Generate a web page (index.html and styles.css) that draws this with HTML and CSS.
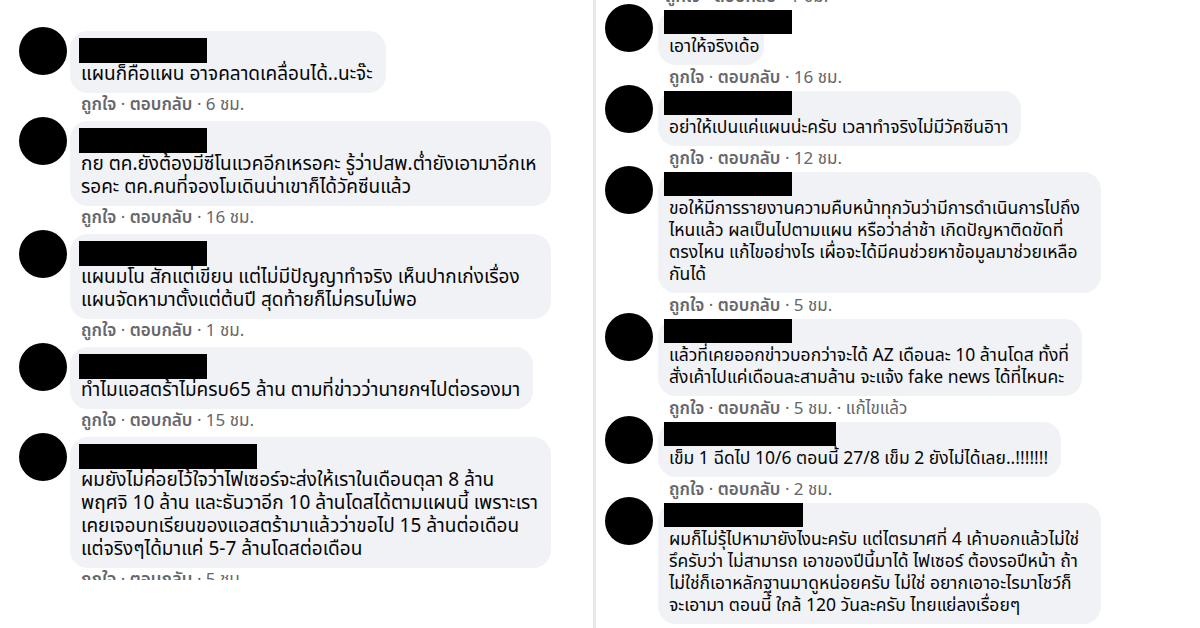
FILE: index.html
```html
<!DOCTYPE html>
<html lang="th">
<head>
<meta charset="utf-8">
<title>Comments</title>
<link rel="stylesheet" href="styles.css">
</head>
<body>
<div class="page">
  <section class="panel panel-left">
    <div class="clip">
      <div class="comment">
        <div class="avatar"></div>
        <div class="body">
          <div class="bubble">
            <div class="name"></div>
            <p class="text">แผนก็คือแผน อาจคลาดเคลื่อนได้..นะจ๊ะ</p>
          </div>
          <div class="actions"><b>ถูกใจ</b> · <b>ตอบกลับ</b> · 6 ชม.</div>
        </div>
      </div>
      <div class="comment">
        <div class="avatar"></div>
        <div class="body">
          <div class="bubble bubble-wide">
            <div class="name"></div>
            <p class="text">กย ตค.ยังต้องมีซีโนแวคอีกเหรอคะ รู้ว่าปสพ.ต่ำยังเอามาอีกเห<br>รอคะ ตค.คนที่จองโมเดินน่าเขาก็ได้วัคซีนแล้ว</p>
          </div>
          <div class="actions"><b>ถูกใจ</b> · <b>ตอบกลับ</b> · 16 ชม.</div>
        </div>
      </div>
      <div class="comment">
        <div class="avatar"></div>
        <div class="body">
          <div class="bubble bubble-wide">
            <div class="name"></div>
            <p class="text">แผนมโน สักแต่เขียน แต่ไม่มีปัญญาทำจริง เห็นปากเก่งเรื่อง<br>แผนจัดหามาตั้งแต่ต้นปี สุดท้ายก็ไม่ครบไม่พอ</p>
          </div>
          <div class="actions"><b>ถูกใจ</b> · <b>ตอบกลับ</b> · 1 ชม.</div>
        </div>
      </div>
      <div class="comment">
        <div class="avatar"></div>
        <div class="body">
          <div class="bubble">
            <div class="name"></div>
            <p class="text">ทำไมแอสตร้าไม่ครบ65 ล้าน ตามที่ข่าวว่านายกฯไปต่อรองมา</p>
          </div>
          <div class="actions"><b>ถูกใจ</b> · <b>ตอบกลับ</b> · 15 ชม.</div>
        </div>
      </div>
      <div class="comment">
        <div class="avatar"></div>
        <div class="body">
          <div class="bubble bubble-wide">
            <div class="name name-long"></div>
            <p class="text">ผมยังไม่ค่อยไว้ใจว่าไฟเซอร์จะส่งให้เราในเดือนตุลา 8 ล้าน<br>พฤศจิ 10 ล้าน และธันวาอีก 10 ล้านโดสได้ตามแผนนี้ เพราะเรา<br>เคยเจอบทเรียนของแอสตร้ามาแล้วว่าขอไป 15 ล้านต่อเดือน<br>แต่จริงๆได้มาแค่ 5-7 ล้านโดสต่อเดือน</p>
          </div>
          <div class="actions"><b>ถูกใจ</b> · <b>ตอบกลับ</b> · 5 ชม.</div>
        </div>
      </div>
    </div>
  </section>

  <section class="panel panel-right">
    <div class="actions actions-top"><b>ถูกใจ</b> · <b>ตอบกลับ</b> · 1 ชม.</div>
    <div class="comment">
      <div class="avatar"></div>
      <div class="body">
        <div class="bubble bubble-short">
          <div class="name"></div>
          <p class="text">เอาให้จริงเด้อ</p>
        </div>
        <div class="actions"><b>ถูกใจ</b> · <b>ตอบกลับ</b> · 16 ชม.</div>
      </div>
    </div>
    <div class="comment">
      <div class="avatar"></div>
      <div class="body">
        <div class="bubble">
          <div class="name"></div>
          <p class="text">อย่าให้เปนแค่แผนน่ะครับ เวลาทำจริงไม่มีวัคซีนอิาา</p>
        </div>
        <div class="actions"><b>ถูกใจ</b> · <b>ตอบกลับ</b> · 12 ชม.</div>
      </div>
    </div>
    <div class="comment">
      <div class="avatar"></div>
      <div class="body">
        <div class="bubble bubble-wide">
          <div class="name"></div>
          <p class="text">ขอให้มีการรายงานความคืบหน้าทุกวันว่ามีการดำเนินการไปถึง<br>ไหนแล้ว ผลเป็นไปตามแผน หรือว่าล่าช้า เกิดปัญหาติดขัดที่<br>ตรงไหน แก้ไขอย่างไร เผื่อจะได้มีคนช่วยหาข้อมูลมาช่วยเหลือ<br>กันได้</p>
        </div>
        <div class="actions"><b>ถูกใจ</b> · <b>ตอบกลับ</b> · 5 ชม.</div>
      </div>
    </div>
    <div class="comment">
      <div class="avatar"></div>
      <div class="body">
        <div class="bubble">
          <div class="name"></div>
          <p class="text">แล้วที่เคยออกข่าวบอกว่าจะได้ AZ เดือนละ 10 ล้านโดส ทั้งที่<br>สั่งเค้าไปแค่เดือนละสามล้าน จะแจ้ง fake news ได้ที่ไหนคะ</p>
        </div>
        <div class="actions"><b>ถูกใจ</b> · <b>ตอบกลับ</b> · 5 ชม. · แก้ไขแล้ว</div>
      </div>
    </div>
    <div class="comment">
      <div class="avatar"></div>
      <div class="body">
        <div class="bubble">
          <div class="name name-mid"></div>
          <p class="text">เข็ม 1 ฉีดไป 10/6 ตอนนี้ 27/8 เข็ม 2 ยังไม่ได้เลย..!!!!!!!</p>
        </div>
        <div class="actions"><b>ถูกใจ</b> · <b>ตอบกลับ</b> · 2 ชม.</div>
      </div>
    </div>
    <div class="comment">
      <div class="avatar"></div>
      <div class="body">
        <div class="bubble bubble-wide">
          <div class="name name-six"></div>
          <p class="text">ผมก็ไม่รุ้ไปหามายังไงนะครับ แต่ไตรมาศที่ 4 เค้าบอกแล้วไม่ใช่<br>รึครับว่า ไม่สามารถ เอาของปีนี้มาได้ ไฟเซอร์ ต้องรอปีหน้า ถ้า<br>ไม่ใช่ก็เอาหลักฐานมาดูหน่อยครับ ไม่ใช่ อยากเอาอะไรมาโชว์ก็<br>จะเอามา ตอนนี้ ใกล้ 120 วันละครับ ไทยแย่ลงเรื่อยๆ</p>
        </div>
      </div>
    </div>
  </section>
</div>
</body>
</html>
```

FILE: styles.css
```css
* { box-sizing: border-box; }

html, body {
  margin: 0;
  padding: 0;
  background: #ffffff;
}

body {
  font-family: "Noto Sans Thai", "Leelawadee UI", Tahoma, "Noto Sans", "Liberation Sans", sans-serif;
  color: #050505;
}

.page {
  display: flex;
  width: 1200px;
  height: 628px;
  overflow: hidden;
}

.panel {
  height: 628px;
  overflow: hidden;
}

.panel-left {
  width: 596px;
  border-right: 3px solid #e6e7e9;
  padding-left: 19px;
}

.clip {
  height: 580px;
  overflow: hidden;
  padding-top: 31px;
}

.panel-right {
  flex: 1;
  padding-left: 9px;
}

.comment {
  display: flex;
  align-items: flex-start;
}

.avatar {
  width: 48px;
  height: 48px;
  border-radius: 50%;
  background: #000;
  flex: none;
  margin-top: -4px;
  margin-right: 3px;
}

.panel-right .avatar {
  margin-top: -6px;
  margin-right: 5px;
}

.body {
  display: flex;
  flex-direction: column;
  align-items: flex-start;
}

.bubble {
  background: #f0f2f5;
  border-radius: 18px;
  padding: 7px 13px 7px 11px;
  white-space: nowrap;
}

.panel-left .bubble-wide { width: 481px; }

.name {
  width: 128px;
  height: 25px;
  background: #000;
  margin-left: -2px;
}

.name-long { width: 178px; }

.text {
  margin: 0;
  font-size: 19px;
  line-height: 23px;
}

.panel-right .bubble {
  padding: 0 13px 7px 11px;
}

.panel-right .bubble-wide { width: 443px; }
.panel-right .bubble-short { width: 106px; }

.panel-right .name {
  height: 24px;
  margin-left: -5px;
}

.panel-right .name-mid { width: 172px; }
.panel-right .name-six { width: 139px; }

.panel-right .text {
  font-size: 17.5px;
  line-height: 22px;
  margin-top: 2px;
}

.actions {
  font-size: 17px;
  line-height: 20px;
  color: #65676b;
  padding-left: 11px;
  margin-top: 2px;
  margin-bottom: 6px;
  white-space: nowrap;
}

.actions b {
  font-weight: 600;
}

.panel-right .actions {
  margin-top: 3px;
  margin-bottom: 3px;
  padding-left: 11px;
}

.panel-right .actions-top {
  margin-top: -13px;
  margin-bottom: 3px;
  padding-left: 60px;
}
```
